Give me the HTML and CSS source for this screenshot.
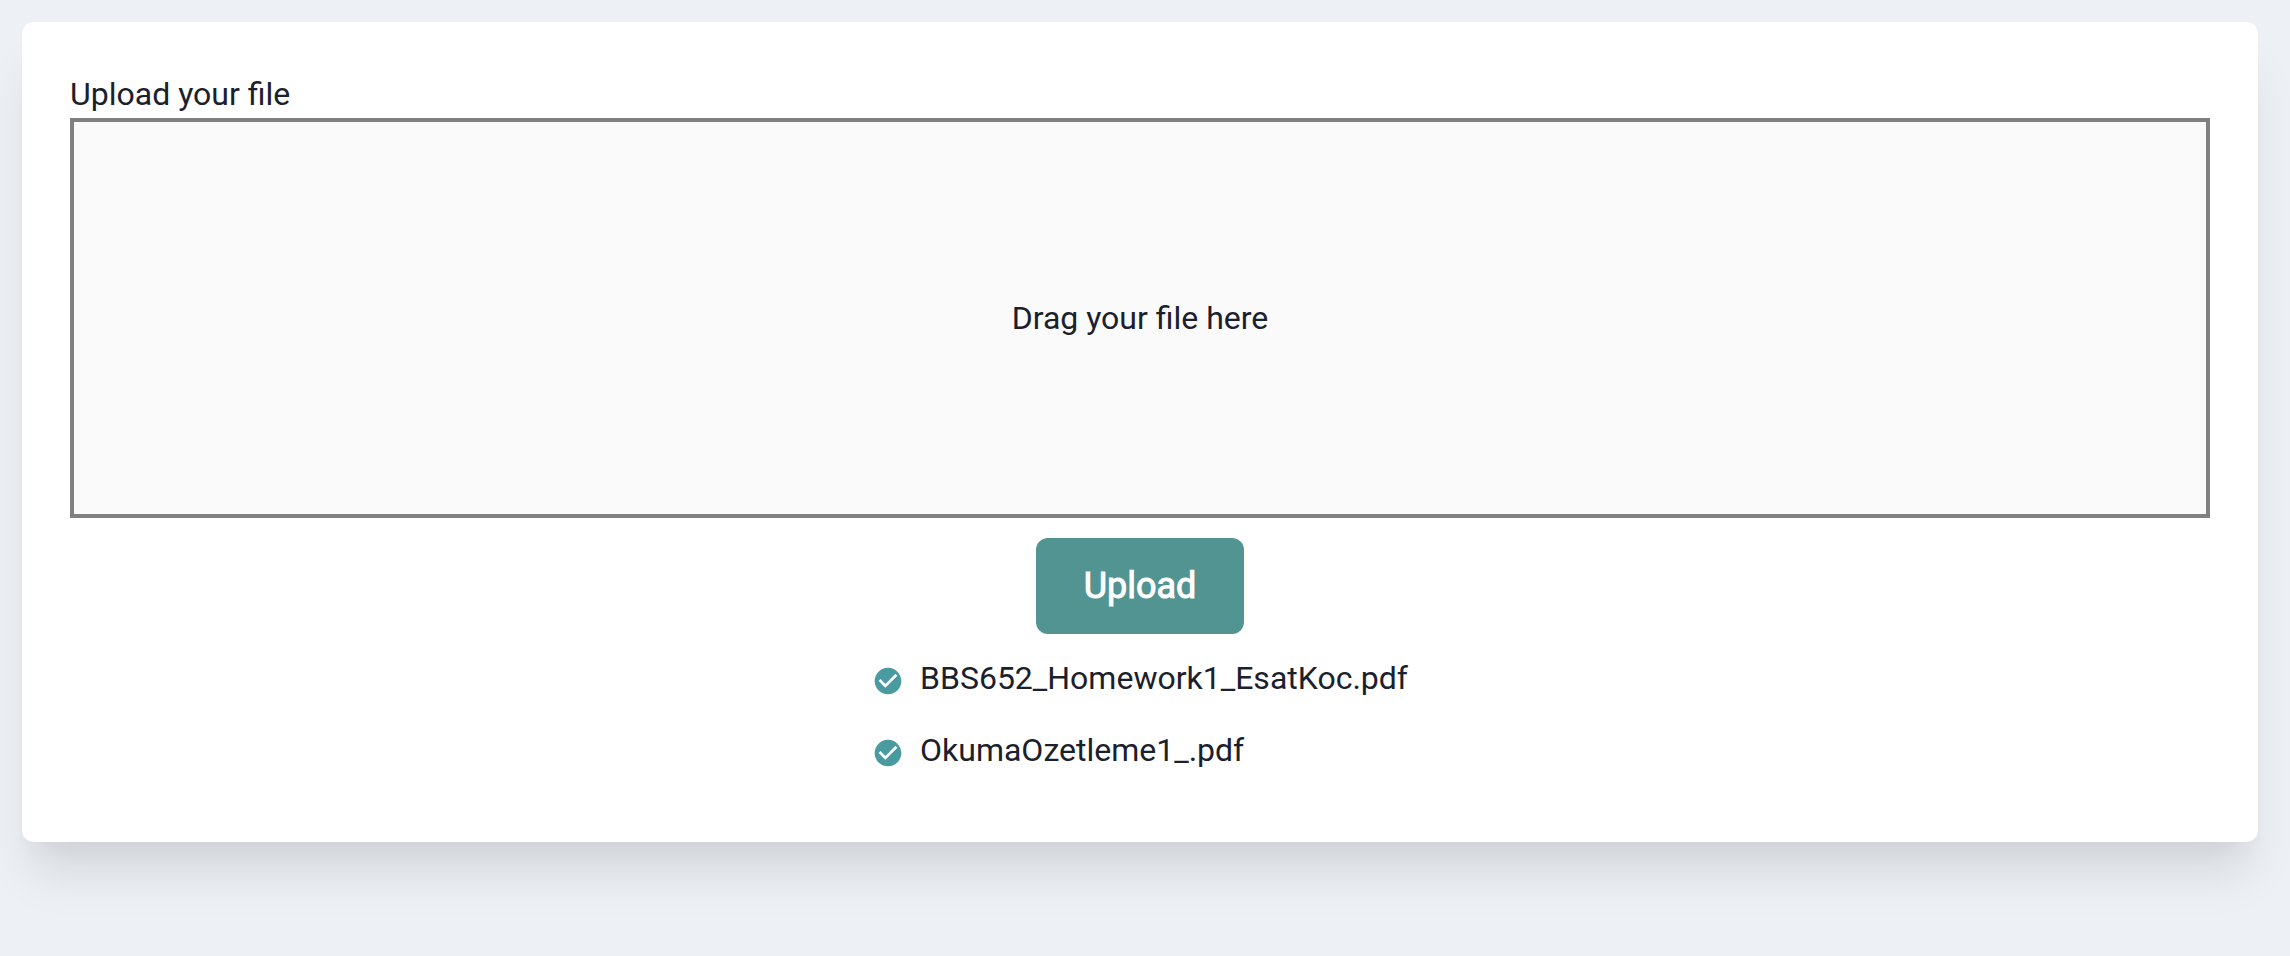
FILE: index.html
```
<!DOCTYPE html>
<html lang="en">
<head>
<meta charset="utf-8">
<meta name="viewport" content="width=device-width, initial-scale=1">
<title>Upload your file</title>
<link rel="stylesheet" href="styles.css">
</head>
<body>
<main class="page">
  <form class="card">
    <label class="field-label" for="file">Upload your file</label>
    <label class="dropzone">
      <input class="file-input" type="file" id="file">
      <span>Drag your file here</span>
    </label>
    <button class="upload-button" type="button">Upload</button>
    <ul class="file-list">
      <li><svg class="check-icon" viewBox="0 0 24 24" aria-hidden="true"><path d="M12 2C6.48 2 2 6.48 2 12s4.48 10 10 10 10-4.48 10-10S17.52 2 12 2zm-2 15l-5-5 1.41-1.41L10 14.17l7.59-7.59L19 8l-9 9z"/></svg>BBS652_Homework1_EsatKoc.pdf</li>
      <li><svg class="check-icon" viewBox="0 0 24 24" aria-hidden="true"><path d="M12 2C6.48 2 2 6.48 2 12s4.48 10 10 10 10-4.48 10-10S17.52 2 12 2zm-2 15l-5-5 1.41-1.41L10 14.17l7.59-7.59L19 8l-9 9z"/></svg>OkumaOzetleme1_.pdf</li>
    </ul>
  </form>
</main>
</body>
</html>
```
FILE: styles.css
```
*,
*::before,
*::after {
  box-sizing: border-box;
}

body {
  margin: 0;
  min-height: 100vh;
  background: #edf1f6;
  color: #1a202c;
  font-family: Roboto, "Liberation Sans", sans-serif;
  font-size: 32px;
  line-height: 48px;
}

.page {
  padding: 22px 32px 22px 22px;
}

.card {
  display: flex;
  flex-direction: column;
  align-items: center;
  padding: 48px;
  border-radius: 12px;
  background: #fff;
  box-shadow: 0 40px 50px -10px rgba(0, 0, 0, 0.1), 0 20px 20px -10px rgba(0, 0, 0, 0.04);
}

.field-label {
  align-self: flex-start;
}

.dropzone {
  display: flex;
  align-items: center;
  justify-content: center;
  align-self: stretch;
  min-height: 400px;
  border: 4px solid #808080;
  background: #fafafa;
  cursor: pointer;
}

.file-input {
  position: absolute;
  width: 1px;
  height: 1px;
  overflow: hidden;
  clip-path: inset(50%);
}

.upload-button {
  margin: 20px 0;
  padding: 0 48px;
  height: 96px;
  border: 0;
  border-radius: 12px;
  background: #519492;
  color: #fff;
  font-family: inherit;
  font-size: 36px;
  font-weight: 400;
  -webkit-text-stroke: 1px #fff;
  cursor: pointer;
}

.file-list {
  display: flex;
  flex-direction: column;
  gap: 24px;
  margin: 0 0 20px;
  padding: 0;
  list-style: none;
}

.check-icon {
  width: 32px;
  height: 32px;
  margin-right: 16px;
  vertical-align: text-bottom;
  fill: #4a9ba0;
}
```
